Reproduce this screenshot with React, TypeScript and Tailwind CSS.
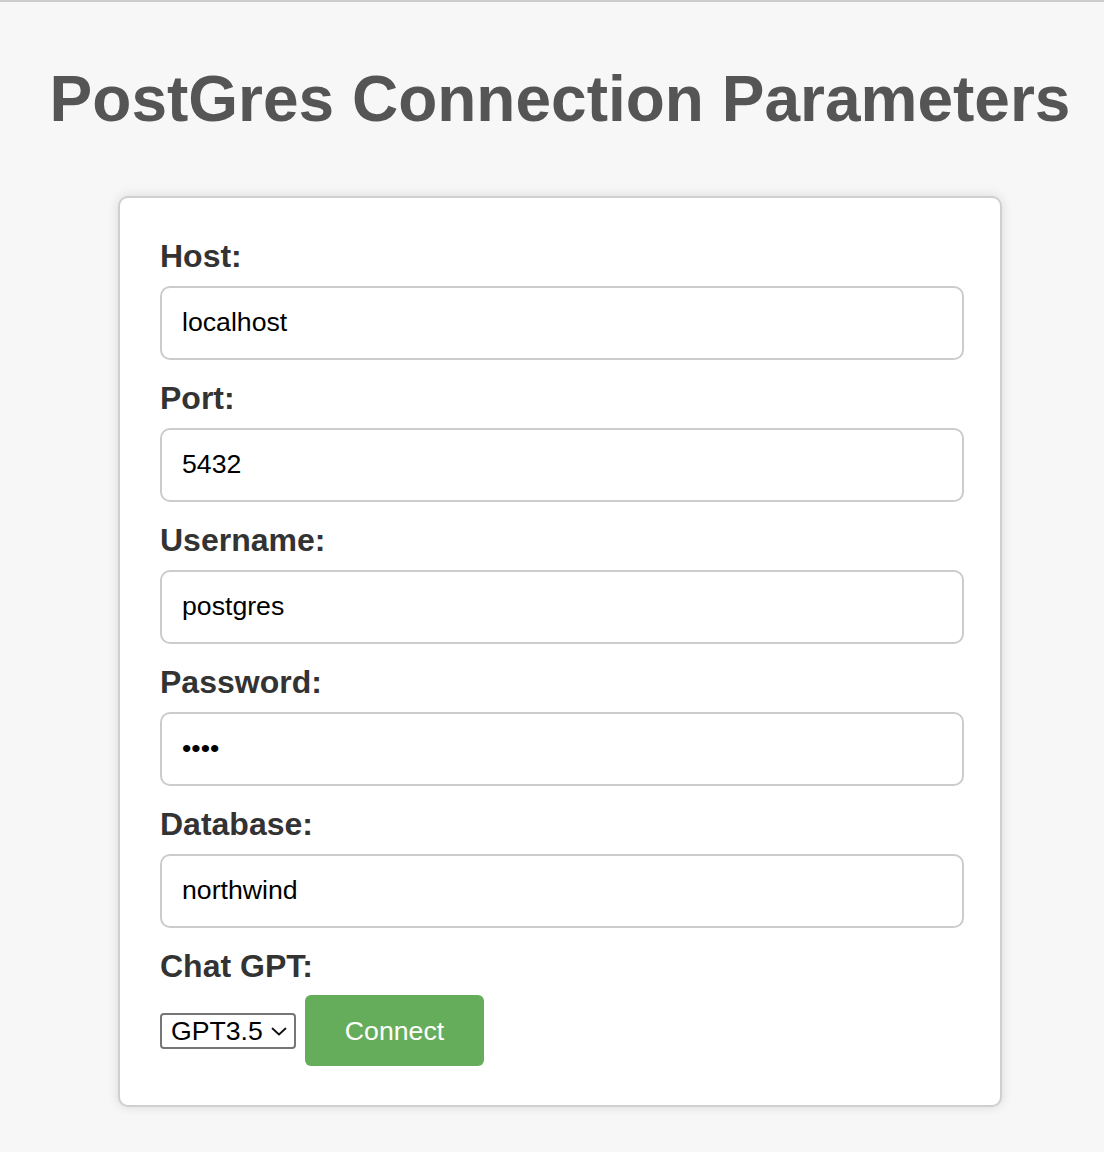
import React from "react";

const fields = [
  { label: "Host:", value: "localhost", type: "text" },
  { label: "Port:", value: "5432", type: "text" },
  { label: "Username:", value: "postgres", type: "text" },
  { label: "Password:", value: "1234", type: "password" },
  { label: "Database:", value: "northwind", type: "text" },
];

export default function App() {
  return (
    <div
      className="min-h-[1152px] w-full bg-[#f7f7f7] border-t-2 border-[#cccccc]"
      style={{ fontFamily: '"Liberation Sans", Arial, sans-serif' }}
    >
      <div className="flex flex-col items-center pl-[16px]">
        <h1 className="mt-[60px] text-[64px] leading-[74px] font-bold text-[#555555] whitespace-nowrap">
          PostGres Connection Parameters
        </h1>
        <div className="mt-[60px] w-[884px] bg-white border-2 border-[#cfcfcf] rounded-[10px] shadow-[0_0_12px_rgba(0,0,0,0.12)] pl-[40px] pt-[40px] pb-[39px]">
          {fields.map((f) => (
            <div key={f.label} className="flex flex-col">
              <label className="text-[32px] leading-[37px] font-bold text-[#333333]">
                {f.label}
              </label>
              <input
                type={f.type}
                defaultValue={f.value}
                readOnly
                className="mt-[11px] mb-[20px] w-[804px] h-[74px] border-2 border-[#cccccc] rounded-[10px] pl-[20px] pb-[2px] text-[26.67px] text-black bg-white outline-none"
                style={{ fontFamily: '"Liberation Sans", Arial, sans-serif' }}
              />
            </div>
          ))}
          <label className="block text-[32px] leading-[37px] font-bold text-[#333333]">
            Chat GPT:
          </label>
          <div className="mt-[10px] flex items-center gap-[9px]">
            <div className="relative">
              <select
                defaultValue="GPT3.5"
                className="appearance-none w-[136px] h-[36px] border-2 border-[#767676] rounded-[4px] bg-white pl-[9px] text-[26.67px] leading-[32px] text-black outline-none"
                style={{ fontFamily: '"Liberation Sans", Arial, sans-serif' }}
              >
                <option value="GPT3.5">GPT3.5</option>
                <option value="GPT4">GPT4</option>
              </select>
              <svg
                className="absolute left-[111px] top-[14px] pointer-events-none"
                width="16"
                height="9"
                viewBox="0 0 16 9"
                fill="none"
              >
                <path d="M1.5 1.5 L8 7.5 L14.5 1.5" stroke="#111" strokeWidth="1.8" strokeLinecap="round" strokeLinejoin="round" />
              </svg>
            </div>
            <button className="w-[179px] h-[71px] bg-[#66ad5b] rounded-[6px] text-white text-[26.67px]">
              Connect
            </button>
          </div>
        </div>
      </div>
    </div>
  );
}
